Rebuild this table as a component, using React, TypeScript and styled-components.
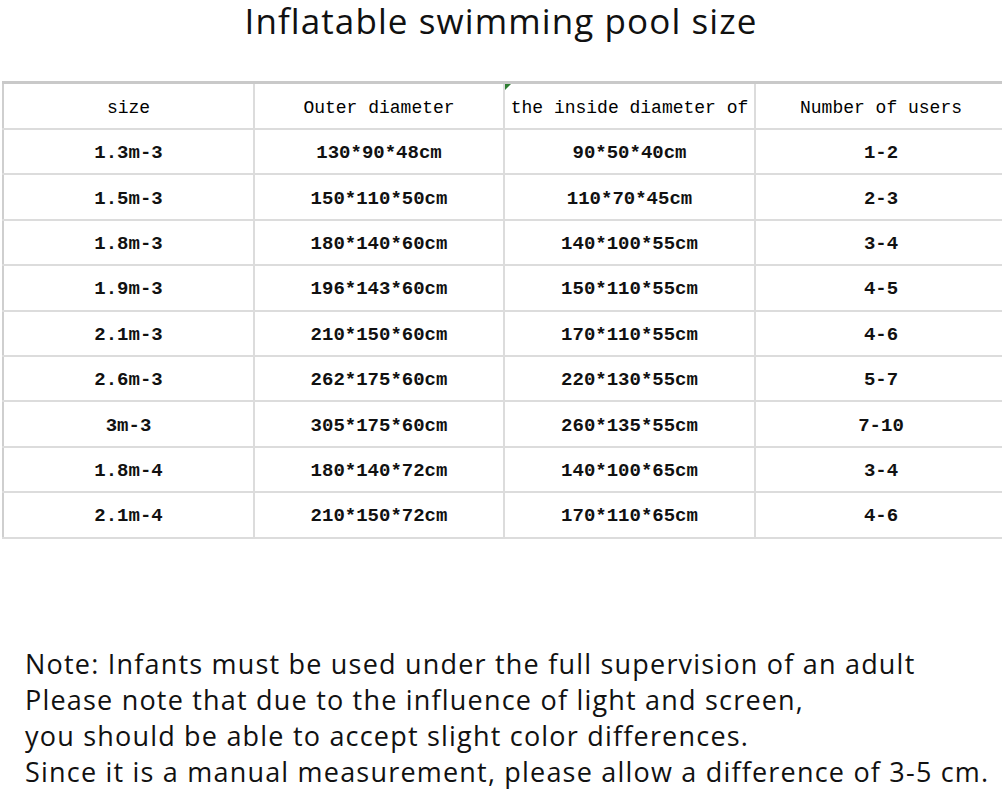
import React from "react";
import styled, { createGlobalStyle } from "styled-components";

const Global = createGlobalStyle`
  html, body { margin: 0; padding: 0; background: #ffffff; }
  body { overflow: hidden; width: 1002px; height: 796px; }
`;

const Page = styled.div`
  width: 1002px;
  height: 796px;
  display: flex;
  flex-direction: column;
  background: #fff;
  color: #111;
`;

const Title = styled.h1`
  margin: 0;
  height: 81px;
  box-sizing: border-box;
  text-align: center;
  font-family: "Open Sans", "Noto Sans", sans-serif;
  font-weight: 400;
  font-size: 35px;
  line-height: 42px;
  letter-spacing: 1.1px;
  color: #111;
`;

const Table = styled.table`
  margin-left: 2px;
  border-collapse: collapse;
  table-layout: fixed;
  width: 1004px;
  font-family: "Liberation Mono", "DejaVu Sans Mono", monospace;
  color: #111;
  border-top: 3px solid #c9c9c9;
  border-left: 2px solid #cfcfcf;
`;

const Col = styled.col<{ $w: number }>`
  width: ${(p) => p.$w}px;
`;

const HeadCell = styled.th<{ $marker?: boolean }>`
  position: relative;
  height: 41px;
  padding: 3px 0 0;
  font-size: 18px;
  font-weight: 400;
  text-align: center;
  white-space: nowrap;
  color: #000;
  border-right: 2px solid #dcdcdc;
  border-bottom: 2px solid #dcdcdc;
  ${(p) =>
    p.$marker
      ? `&::before {
    content: "";
    position: absolute;
    left: 0;
    top: 0;
    border-top: 6px solid #2e7d32;
    border-right: 6px solid transparent;
  }`
      : ""}
`;

const Cell = styled.td`
  height: 40.4px;
  padding: 3px 0 0;
  font-size: 19px;
  text-align: center;
  white-space: nowrap;
  font-weight: 700;
  border-right: 2px solid #dcdcdc;
  border-bottom: 2px solid #dcdcdc;
`;

const Notes = styled.div`
  margin-top: auto;
  padding: 0 0 6px 25px;
  font-family: "Open Sans", "Noto Sans", sans-serif;
  font-size: 27px;
  line-height: 36px;
  letter-spacing: 1.2px;
  color: #111;
  white-space: nowrap;
`;

const NoteLine = styled.div``;

const widths = [251, 250, 251, 252];

const headers = ["size", "Outer diameter", "the inside diameter of", "Number of users"];

const rows: string[][] = [
  ["1.3m-3", "130*90*48cm", "90*50*40cm", "1-2"],
  ["1.5m-3", "150*110*50cm", "110*70*45cm", "2-3"],
  ["1.8m-3", "180*140*60cm", "140*100*55cm", "3-4"],
  ["1.9m-3", "196*143*60cm", "150*110*55cm", "4-5"],
  ["2.1m-3", "210*150*60cm", "170*110*55cm", "4-6"],
  ["2.6m-3", "262*175*60cm", "220*130*55cm", "5-7"],
  ["3m-3", "305*175*60cm", "260*135*55cm", "7-10"],
  ["1.8m-4", "180*140*72cm", "140*100*65cm", "3-4"],
  ["2.1m-4", "210*150*72cm", "170*110*65cm", "4-6"],
];

const notes = [
  "Note: Infants must be used under the full supervision of an adult",
  "Please note that due to the influence of light and screen,",
  "you should be able to accept slight color differences.",
  "Since it is a manual measurement, please allow a difference of 3-5 cm.",
];

export default function App() {
  return (
    <Page>
      <Global />
      <Title>Inflatable swimming pool size</Title>
      <Table>
        <colgroup>
          {widths.map((w, i) => (
            <Col key={i} $w={w} />
          ))}
        </colgroup>
        <thead>
          <tr>
            {headers.map((h, i) => (
              <HeadCell key={h} $marker={i === 2}>
                {h}
              </HeadCell>
            ))}
          </tr>
        </thead>
        <tbody>
          {rows.map((r) => (
            <tr key={r[0]}>
              {r.map((c, i) => (
                <Cell key={i}>{c}</Cell>
              ))}
            </tr>
          ))}
        </tbody>
      </Table>
      <Notes>
        {notes.map((n) => (
          <NoteLine key={n}>{n}</NoteLine>
        ))}
      </Notes>
    </Page>
  );
}
